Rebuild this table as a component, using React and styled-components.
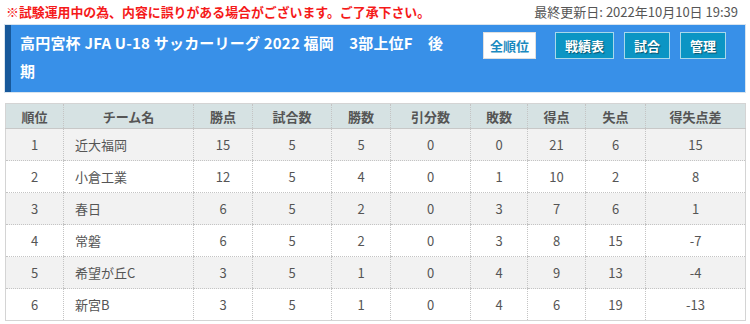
import styled, { createGlobalStyle } from 'styled-components';

const GlobalStyle = createGlobalStyle`
  body {
    margin: 0;
    background: #fff;
    font-family: "Noto Sans CJK JP", "Noto Sans", sans-serif;
  }
`;

const Page = styled.div`
  width: 750px;
  padding: 2px 5px 0 5px;
  box-sizing: border-box;
`;

const TopBar = styled.div`
  display: flex;
  justify-content: space-between;
  align-items: center;
  height: 18px;
  padding: 0 7px 0 1px;
`;

const Notice = styled.span`
  color: #f51a1a;
  font-size: 12.9px;
  font-weight: bold;
`;

const Updated = styled.span`
  color: #555;
  font-size: 13px;
`;

const Header = styled.div`
  margin-top: 5px;
  display: flex;
  align-items: flex-start;
  justify-content: space-between;
  background: #3890e8;
  border-left: 6px solid #17589a;
  box-shadow: 0 0 0 1px #d8e4ee;
  padding: 4px 19px 7px 9px;
`;

const Title = styled.h1`
  margin: 0;
  width: 425px;
  color: #fff;
  font-size: 15px;
  font-weight: bold;
  line-height: 28px;
  letter-spacing: 0.2px;
`;

const Nav = styled.div`
  display: flex;
  gap: 10px;
  margin-top: 3px;
`;

const NavButton = styled.button`
  height: 27px;
  padding: 0 ${p => (p.$active ? '6px' : '9px')};
  margin-right: ${p => (p.$active ? '9px' : '0')};
  border: 1px solid ${p => (p.$active ? '#e0e0e0' : '#a8d8ea')};
  background: ${p => (p.$active ? '#fff' : '#0b95c4')};
  color: ${p => (p.$active ? '#1b8ac0' : '#fff')};
  font-family: inherit;
  font-size: 13px;
  font-weight: bold;
  text-shadow: ${p => (p.$active ? 'none' : '1px 1px 1px rgba(0,0,0,0.45)')};
  cursor: pointer;
`;

const Table = styled.table`
  margin-top: 11px;
  width: 740px;
  border-collapse: collapse;
  table-layout: fixed;
  border: 1px solid #d4d4d4;
  font-size: 13px;
  color: #555;
`;

const Th = styled.th`
  height: 24px;
  padding: 0;
  background: #d6e2e3;
  color: #555;
  font-weight: bold;
  border-left: 1px dotted #c4c4c4;
  border-bottom: 1px solid #c8c8c8;
  text-align: center;
`;

const Row = styled.tr`
  background: ${p => (p.$odd ? '#f2f2f2' : '#fff')};
`;

const Td = styled.td`
  height: 31px;
  padding: 0 ${p => (p.$left ? '11px' : '0')};
  text-align: ${p => (p.$left ? 'left' : 'center')};
  border-left: 1px dotted #c4c4c4;
  border-bottom: 1px dotted #c4c4c4;
  white-space: nowrap;
`;

const widths = [58, 130, 59, 79, 59, 80, 57, 58, 60, 100];
const heads = ['順位', 'チーム名', '勝点', '試合数', '勝数', '引分数', '敗数', '得点', '失点', '得失点差'];

const rows = [
  [1, '近大福岡', 15, 5, 5, 0, 0, 21, 6, 15],
  [2, '小倉工業', 12, 5, 4, 0, 1, 10, 2, 8],
  [3, '春日', 6, 5, 2, 0, 3, 7, 6, 1],
  [4, '常磐', 6, 5, 2, 0, 3, 8, 15, -7],
  [5, '希望が丘C', 3, 5, 1, 0, 4, 9, 13, -4],
  [6, '新宮B', 3, 5, 1, 0, 4, 6, 19, -13],
];

function App() {
  return (
    <Page>
      <GlobalStyle />
      <TopBar>
        <Notice>※試験運用中の為、内容に誤りがある場合がございます。ご了承下さい。</Notice>
        <Updated>最終更新日: 2022年10月10日 19:39</Updated>
      </TopBar>
      <Header>
        <Title>高円宮杯 JFA U-18 サッカーリーグ 2022 福岡　3部上位F　後期</Title>
        <Nav>
          <NavButton $active>全順位</NavButton>
          <NavButton>戦績表</NavButton>
          <NavButton>試合</NavButton>
          <NavButton>管理</NavButton>
        </Nav>
      </Header>
      <Table>
        <colgroup>
          {widths.map((w, i) => <col key={i} style={{ width: w }} />)}
        </colgroup>
        <thead>
          <tr>
            {heads.map(h => <Th key={h}>{h}</Th>)}
          </tr>
        </thead>
        <tbody>
          {rows.map((r, i) => (
            <Row key={r[0]} $odd={i % 2 === 0}>
              {r.map((c, j) => (
                <Td key={j} $left={j === 1}>{c}</Td>
              ))}
            </Row>
          ))}
        </tbody>
      </Table>
    </Page>
  );
}

export default App;
